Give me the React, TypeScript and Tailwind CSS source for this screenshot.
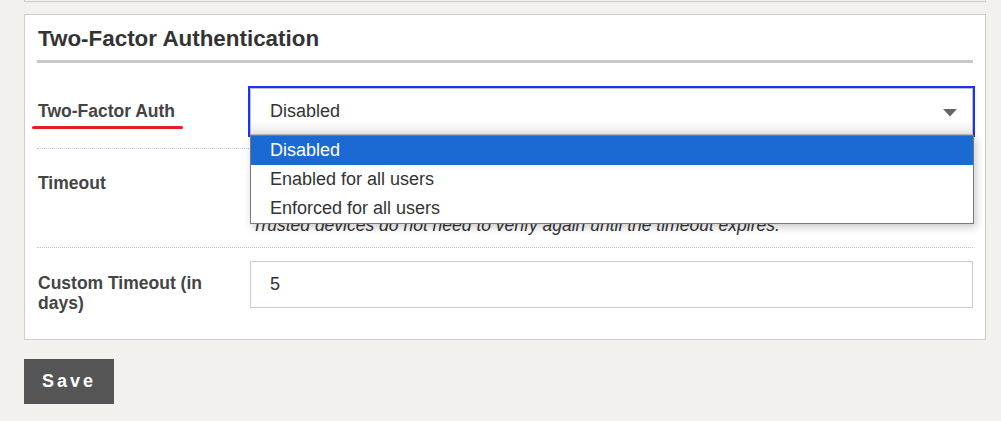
import React from "react";

export default function App() {
  return (
    <div className="w-[1001px] h-[421px] overflow-hidden bg-[#f2f1ed] font-['Liberation_Sans',Arial,sans-serif] text-[#333]">
      <div className="ml-6 w-[962px] h-[2px] border-x border-b border-[#cccccc]" />
      <div className="ml-6 mt-3 w-[962px] border border-[#cccccc] bg-white px-3 pb-[13px]">
        <h2 className="pl-[1px] pt-[11px] pb-[8px] text-[22.4px] leading-[26px] font-bold text-[#333] border-b-[3px] border-[#c8c8c8]">
          Two-Factor Authentication
        </h2>

        {/* Row 1 */}
        <div className="flex pt-[25px] pb-[13px] border-b border-dotted border-[#c4c4c4]">
          <div className="relative w-[213px] pl-[1px] pt-[13px] text-[17.5px] leading-5 font-bold text-[#444]">
            Two-Factor Auth
            <div className="absolute left-[-5px] top-[38px] w-[151px] h-[3px] rounded-full bg-[#e31e24]" />
          </div>
          <div className="relative w-[723px]">
            <div className="flex h-[47px] items-center justify-between border border-[#bdbdbd] bg-[linear-gradient(to_bottom,#ffffff_72%,#e9e9e9)] pl-[19px] pr-[15px] outline-2 outline-[#1b33f2] text-[18px]">
              <span>Disabled</span>
              <svg width="14" height="8" viewBox="0 0 14 8" className="mt-[2px]">
                <path d="M0 0 H14 L7 7.5 Z" fill="#666" />
              </svg>
            </div>
            <div className="absolute left-0 right-[-1px] top-[47px] z-10 border border-[#7a7a7a] bg-white shadow-[2px_3px_8px_rgba(0,0,0,0.22)] text-[18px]">
              <div className="h-[29px] flex items-center pl-[19px] bg-[#1b69d3] text-white">Disabled</div>
              <div className="h-[29px] flex items-center pl-[19px] text-[#333]">Enabled for all users</div>
              <div className="h-[29px] flex items-center pl-[19px] text-[#333]">Enforced for all users</div>
            </div>
          </div>
        </div>

        {/* Row 2 */}
        <div className="flex pt-[11px] pb-[12px] border-b border-dotted border-[#c4c4c4]">
          <div className="w-[213px] pl-[1px] pt-[13px] text-[17.5px] leading-5 font-bold text-[#444]">Timeout</div>
          <div className="w-[723px]">
            <div className="flex h-[47px] items-center justify-between border border-[#bdbdbd] bg-white pl-[19px] pr-[15px] text-[18px]">
              <span>30 days</span>
            </div>
            <div className="mt-[8px] pl-[2px] text-[17.5px] leading-5 italic text-[#333]">
              Trusted devices do not need to verify again until the timeout expires.
            </div>
          </div>
        </div>

        {/* Row 3 */}
        <div className="flex pt-[13px] pb-[13px]">
          <div className="w-[213px] pl-[1px] pt-3 pr-4 text-[17.5px] leading-5 font-bold text-[#444]">
            Custom Timeout (in days)
          </div>
          <div className="w-[723px]">
            <div className="flex h-[47px] items-center border border-[#cccccc] bg-white pl-[19px] text-[18px] text-[#333]">
              5
            </div>
          </div>
        </div>
      </div>

      <button className="ml-6 mt-[19px] flex h-[45px] w-[90px] items-center justify-center bg-[#555555] text-[18px] font-bold tracking-[3px] text-white">
        Save
      </button>
    </div>
  );
}
